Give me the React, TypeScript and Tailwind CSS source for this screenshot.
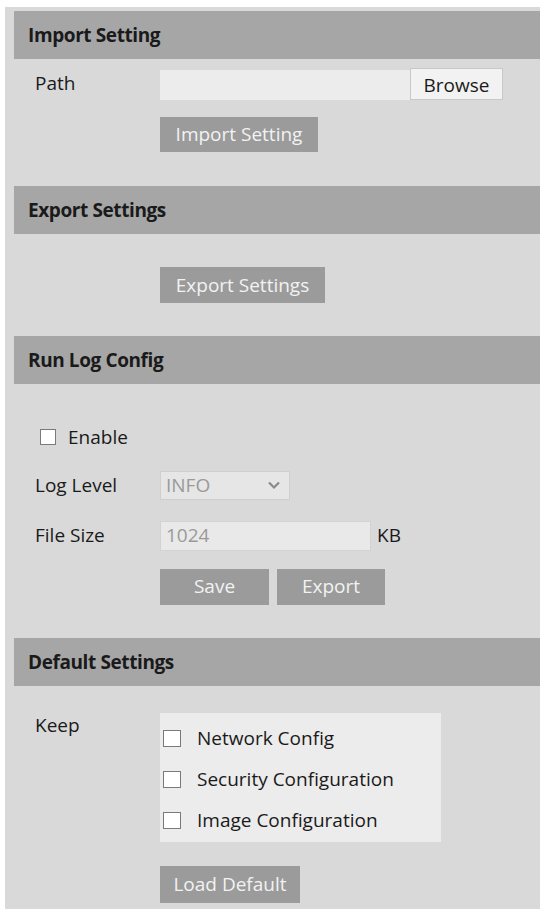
export default function App() {
  const font = { fontFamily: '"Open Sans", "Noto Sans", sans-serif' };

  return (
    <div className="w-[540px] h-[914px] bg-white pt-[7px] pl-[5px]" style={font}>
      <div className="h-[902px] bg-[#d9d9d9] pt-[4px] pl-[9px] text-[#1a1a1a]">
        {/* Import Setting */}
        <div className="h-[48px] bg-[#a6a6a6] flex items-center pl-[14px] text-[19px] font-bold tracking-[-0.4px]">
          Import Setting
        </div>
        <div className="pl-[21px] pt-[9px] h-[127px]">
          <div className="flex items-center">
            <span className="w-[125px] text-[19px] -mt-[2px]">Path</span>
            <div className="w-[250px] h-[30px] mt-[2px] bg-[#ececec]" />
            <button className="w-[93px] h-[32px] bg-[#f2f2f2] border border-[#c8c8c8] text-[19px] leading-none pt-[2px]">
              Browse
            </button>
          </div>
          <button className="mt-[17px] ml-[125px] w-[158px] h-[35px] bg-[#9b9b9b] text-[#f2f2f2] text-[19px] leading-none">
            Import Setting
          </button>
        </div>

        {/* Export Settings */}
        <div className="h-[48px] bg-[#a6a6a6] flex items-center pl-[14px] text-[19px] font-bold tracking-[-0.4px]">
          Export Settings
        </div>
        <div className="pl-[146px] pt-[33px] h-[102px]">
          <button className="w-[165px] h-[36px] bg-[#9b9b9b] text-[#f2f2f2] text-[19px] leading-none">
            Export Settings
          </button>
        </div>

        {/* Run Log Config */}
        <div className="h-[48px] bg-[#a6a6a6] flex items-center pl-[14px] text-[19px] font-bold tracking-[-0.4px]">
          Run Log Config
        </div>
        <div className="pl-[21px] pt-[39px] h-[254px]">
          <label className="flex items-center gap-[12px] ml-[5px]">
            <span className="w-[16px] h-[16px] bg-white border border-[#7a7a7a]" />
            <span className="text-[19px]">Enable</span>
          </label>
          <div className="flex items-center mt-[19px]">
            <span className="w-[125px] text-[19px]">Log Level</span>
            <div className="w-[130px] h-[29px] bg-[#e6e6e6] border border-[#cfcfcf] flex items-center justify-between pl-[5px] pr-[8px]">
              <span className="text-[19px] text-[#9a9a9a] leading-none">INFO</span>
              <svg width="14" height="10" viewBox="0 0 14 10" fill="none">
                <path d="M2 2.5l5 5 5-5" stroke="#8a8a8a" strokeWidth="2.2" />
              </svg>
            </div>
          </div>
          <div className="flex items-center mt-[21px]">
            <span className="w-[125px] text-[19px]">File Size</span>
            <div className="w-[211px] h-[30px] bg-[#e9e9e9] border border-[#d2d2d2] flex items-center pl-[5px]">
              <span className="text-[19px] text-[#9a9a9a] leading-none">1024</span>
            </div>
            <span className="ml-[6px] text-[19px]">KB</span>
          </div>
          <div className="flex gap-[8px] mt-[18px] ml-[125px]">
            <button className="w-[109px] h-[36px] bg-[#9b9b9b] text-[#f2f2f2] text-[19px] leading-none">
              Save
            </button>
            <button className="w-[108px] h-[36px] bg-[#9b9b9b] text-[#f2f2f2] text-[19px] leading-none">
              Export
            </button>
          </div>
        </div>

        {/* Default Settings */}
        <div className="h-[48px] bg-[#a6a6a6] flex items-center pl-[14px] text-[19px] font-bold tracking-[-0.4px]">
          Default Settings
        </div>
        <div className="pl-[21px] pt-[27px]">
          <div className="flex items-start">
            <span className="w-[125px] text-[19px] mt-[-2px]">Keep</span>
            <div className="w-[281px] h-[129px] bg-[#ececec] pl-[3px] pt-[12px] flex flex-col gap-[15px]">
              {["Network Config", "Security Configuration", "Image Configuration"].map((t) => (
                <label key={t} className="flex items-center gap-[16px] h-[26px]">
                  <span className="w-[18px] h-[17px] bg-white border border-[#7a7a7a]" />
                  <span className="text-[19px]">{t}</span>
                </label>
              ))}
            </div>
          </div>
          <button className="mt-[24px] ml-[125px] w-[140px] h-[37px] bg-[#9b9b9b] text-[#f2f2f2] text-[19px] leading-none">
            Load Default
          </button>
        </div>
      </div>
    </div>
  );
}
